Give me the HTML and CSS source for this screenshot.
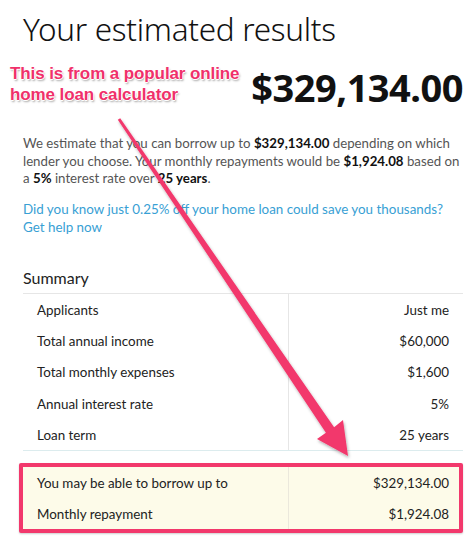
FILE: index.html
```html
<!DOCTYPE html>
<html>
<head>
<meta charset="utf-8">
<link rel="stylesheet" href="styles.css">
</head>
<body>
<div class="page">
  <h1 class="title">Your estimated results</h1>
  <div class="hero">
    <p class="note">This is from a popular online<br>home loan calculator</p>
    <div class="amount">$329,134.00</div>
  </div>
  <p class="intro">We estimate that you can borrow up to <b>$329,134.00</b> depending on which lender you choose. Your monthly repayments would be <b>$1,924.08</b> based on a <b>5%</b> interest rate over <b>25 years</b>.</p>
  <p class="link">Did you know just 0.25% off your home loan could save you thousands? Get help now</p>
  <h2 class="summary-title">Summary</h2>
  <div class="table">
    <div class="row"><span class="label">Applicants</span><span class="value">Just me</span></div>
    <div class="row"><span class="label">Total annual income</span><span class="value">$60,000</span></div>
    <div class="row"><span class="label">Total monthly expenses</span><span class="value">$1,600</span></div>
    <div class="row"><span class="label">Annual interest rate</span><span class="value">5%</span></div>
    <div class="row"><span class="label">Loan term</span><span class="value">25 years</span></div>
  </div>
  <div class="table highlight">
    <div class="row"><span class="label">You may be able to borrow up to</span><span class="value">$329,134.00</span></div>
    <div class="row"><span class="label">Monthly repayment</span><span class="value">$1,924.08</span></div>
  </div>
</div>
<svg class="arrow" width="474" height="536" viewBox="0 0 474 536">
  <defs>
    <filter id="sh" x="-20%" y="-20%" width="140%" height="140%">
      <feDropShadow dx="1" dy="2" stdDeviation="1.5" flood-color="#000" flood-opacity="0.3"/>
    </filter>
  </defs>
  <polygon filter="url(#sh)" fill="#f2386c" points="120.2,118.2 334.1,427.2 343,420 348,456 317,439 325.9,432.8 117.8,119.8"/>
</svg>
</body>
</html>
```
FILE: styles.css
```css
* { box-sizing: border-box; }
html, body { margin: 0; padding: 0; background: #fff; }
body {
  width: 474px;
  height: 536px;
  overflow: hidden;
  position: relative;
  font-family: Lato, "Noto Sans", sans-serif;
  color: #222;
}
.page {
  padding: 8px 11px 0 23px;
}
.title {
  margin: 0;
  font-family: "Noto Sans", sans-serif;
  font-weight: 300;
  font-size: 31.5px;
  line-height: 42px;
  color: #111;
  letter-spacing: -0.3px;
}
.hero {
  position: relative;
  display: flex;
  justify-content: flex-end;
  margin-top: 16px;
  height: 46px;
}
.note {
  position: absolute;
  left: -13px;
  top: -2px;
  margin: 0;
  font-family: "Liberation Sans", Arial, sans-serif;
  font-weight: 700;
  font-size: 17px;
  line-height: 20.5px;
  color: #f0306a;
  letter-spacing: -0.1px;
  text-shadow: 1px 0 0 #fff, -1px 0 0 #fff, 0 1px 0 #fff, 0 -1px 0 #fff, 1px 2px 2px rgba(0,0,0,0.35);
}
.amount {
  font-family: "Noto Sans", sans-serif;
  font-weight: 700;
  font-size: 38px;
  line-height: 42px;
  color: #111;
  letter-spacing: -0.5px;
}
.intro {
  margin: 23px -6px 0 0;
  font-size: 13.25px;
  line-height: 17.5px;
  color: #555;
}
.intro b { color: #111; font-weight: 700; }
.link {
  margin: 12.5px 0 0 0;
  font-size: 13.4px;
  line-height: 18px;
  color: #38a0d4;
}
.summary-title {
  margin: 30px 0 0;
  font-size: 16px;
  font-weight: 400;
  line-height: 24px;
  color: #222;
}
.table {
  margin-top: 3px;
  border-top: 1px solid #e6e6e6;
  border-bottom: 1px solid #dcecee;
  background: linear-gradient(#e6e6e6, #e6e6e6) no-repeat 265px 0 / 1px 100%;
}
.row {
  display: flex;
  justify-content: space-between;
  align-items: center;
  height: 31.3px;
  padding: 0 14px;
  font-size: 13.4px;
  color: #222;
}
.highlight {
  margin: 12px 0 0 -4px;
  border: 4px solid #f2386c;
  border-radius: 2px;
  background: #fdfbe9 linear-gradient(#ebe8dc, #ebe8dc) no-repeat 265px 0 / 1px 100%;
  box-shadow: 0 1px 2px rgba(0,0,0,0.2);
}
.highlight .row { padding: 0 10px 0 14px; height: 31px; }
.arrow {
  position: absolute;
  left: 0;
  top: 0;
  pointer-events: none;
}
```
